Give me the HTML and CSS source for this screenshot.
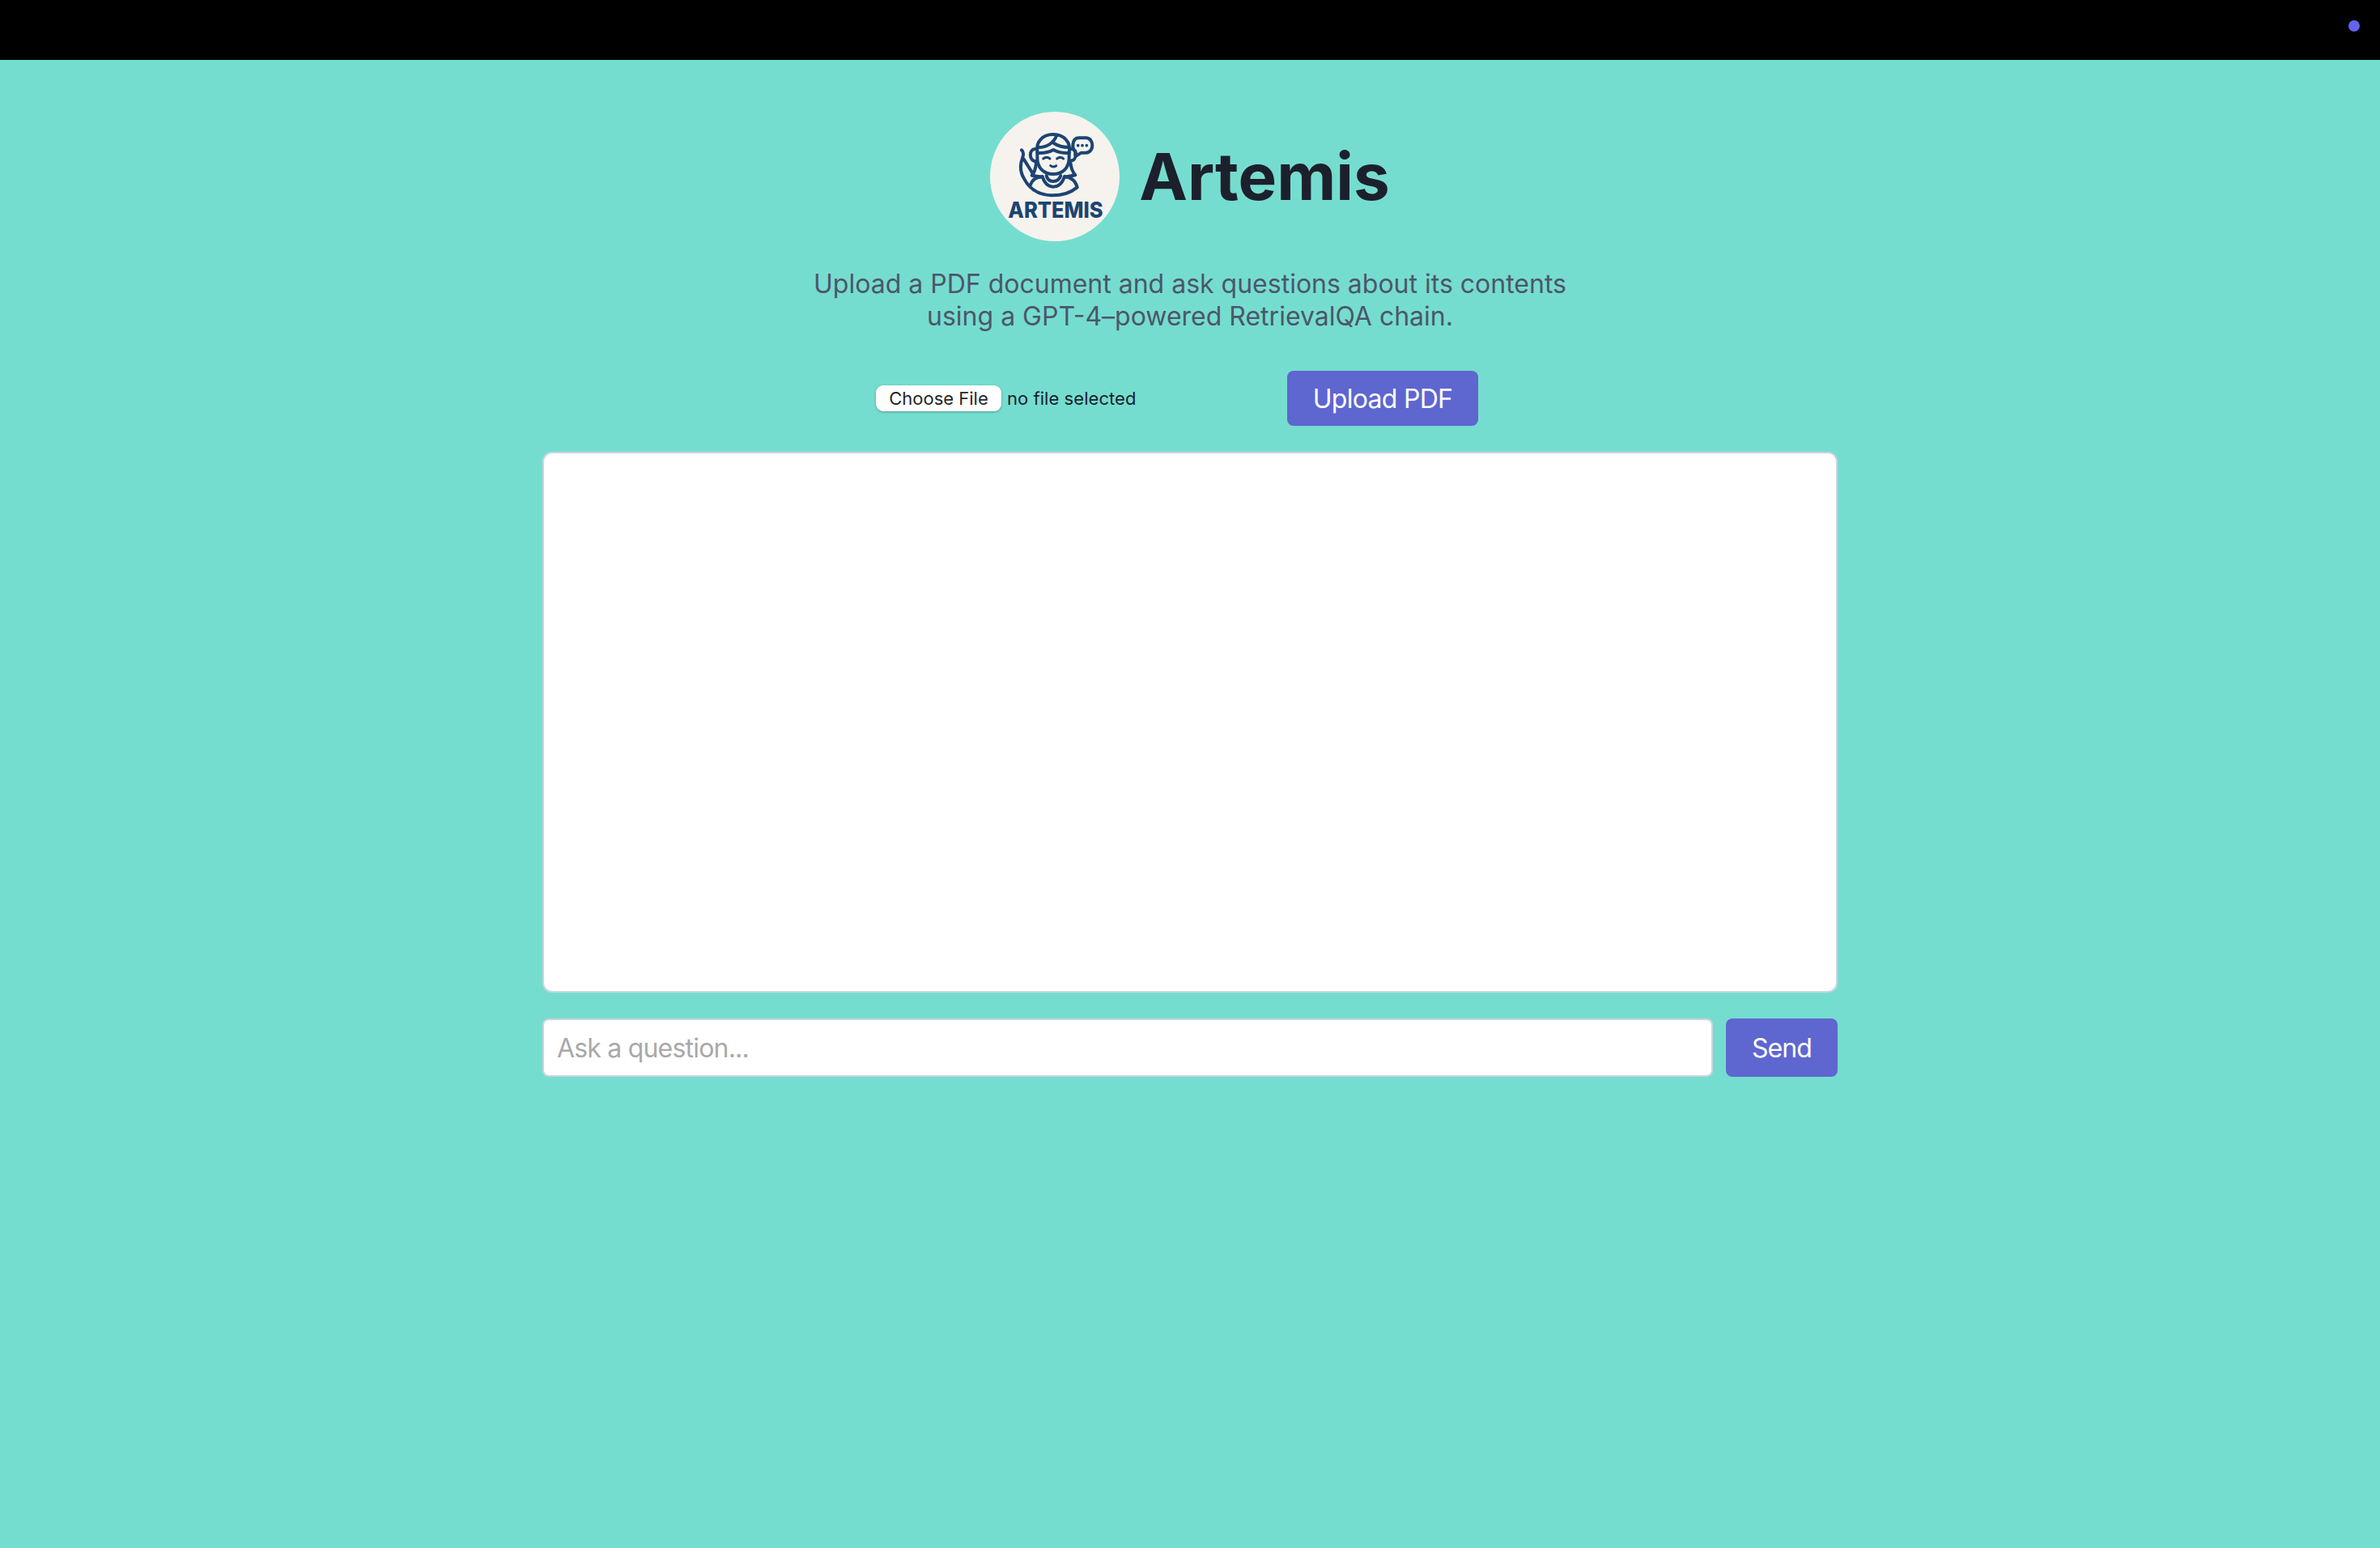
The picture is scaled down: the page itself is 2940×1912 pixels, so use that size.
FILE: index.html
```html
<!DOCTYPE html>
<html lang="en">
<head>
<meta charset="utf-8">
<title>Artemis</title>
<link rel="stylesheet" href="styles.css">
</head>
<body>
<div class="topbar"><span class="indicator"></span></div>
<main class="app">
  <header class="brand">
    <svg class="logo" viewBox="39 38 480 480" role="img" aria-label="Artemis logo">
      <circle cx="279" cy="278" r="240" fill="#f6f3ee"/>
      <g fill="none" stroke="#1c4473" stroke-width="12" stroke-linecap="round" stroke-linejoin="round">
        <path d="M215 190C206 148 236 122 273 122S340 148 332 190"/>
        <path d="M285 127C276 153 248 172 214 170"/>
        <path d="M276 155Q298 170 331 170"/>
        <path d="M215 191Q249 193 274 179Q300 193 332 191"/>
        <path d="M214 187V208C214 246 238 269 273 269S332 246 332 208V187"/>
        <path d="M208 176C181 174 183 222 208 221M338 176C364 174 361 219 340 219"/>
        <path d="M236 212Q249 202 261 212M287 212Q299 202 311 212M263 238Q273 246 284 238" stroke-width="9"/>
        <path d="M210 225Q208 258 194 274L232 280M337 225Q340 256 355 273L315 280"/>
        <path d="M156 180Q166 188 160 207Q143 250 165 286Q195 344 264 348Q323 350 362 318C356 295 340 281 315 278Q303 316 273 316Q244 315 233 278Q197 281 188 311"/>
        <path d="M164 214L198 268"/>
        <path d="M248 275Q253 296 273 296T301 275"/>
        <path d="M355 200V184C341 174 342 135 369 135H394C426 135 426 190 394 190H377L358 202"/>
      </g>
      <g fill="#1c4473"><circle cx="365" cy="163" r="5.500"/><circle cx="381" cy="163" r="5.500"/><circle cx="397" cy="163" r="5.500"/></g>
      <text class="logo-word" x="106" y="432" textLength="352" lengthAdjust="spacingAndGlyphs">ARTEMIS</text>
    </svg>
    <h1 class="title">Artemis</h1>
  </header>
  <p class="intro">Upload a PDF document and ask questions about its contents<br>using a GPT-4–powered RetrievalQA chain.</p>
  <form class="upload">
    <div class="picker"><button type="button" class="choose">Choose File</button><span class="filename">no file selected</span></div>
    <button type="button" class="button button-upload">Upload PDF</button>
  </form>
  <section class="chat"></section>
  <form class="ask">
    <input class="question" type="text" placeholder="Ask a question...">
    <button type="button" class="button button-send">Send</button>
  </form>
</main>
</body>
</html>
```
FILE: styles.css
```css
* { box-sizing: border-box; }
body {
  margin: 0;
  min-height: 1912px;
  background: #75ddcf;
  font-family: Inter, "Liberation Sans", sans-serif;
  color: #1c202c;
}
button, input { font-family: inherit; margin: 0; }
.topbar {
  height: 74px;
  background: #000;
  display: flex;
  justify-content: flex-end;
  padding: 25px 25px 0 0;
}
.indicator { width: 14px; height: 14px; border-radius: 50%; background: #6563ee; }
.app { width: 1600px; margin: 0 auto; padding-top: 64px; }
.brand { display: flex; justify-content: center; align-items: center; gap: 24px; height: 160px; }
.logo { width: 160px; height: 160px; flex: none; }
.logo-word { font: 800 82px Inter, sans-serif; fill: #1c4473; }
.title { margin: 0; font-size: 80px; line-height: 96px; font-weight: 700; }
.intro {
  margin: 33px 0 0;
  text-align: center;
  font-size: 32px;
  line-height: 40px;
  color: #4c566a;
}
.upload { display: flex; height: 68px; margin-top: 47px; padding-left: 412px; align-items: center; }
.picker { width: 508px; display: flex; align-items: center; gap: 7px; }
.choose {
  width: 155px;
  height: 32px;
  padding: 0;
  border: 0;
  border-radius: 9px;
  background: #fff;
  box-shadow: 0 1px 3px rgba(0, 0, 0, .3);
  font-size: 22px;
  line-height: 32px;
  color: #262626;
}
.filename { font-size: 22px; line-height: 32px; letter-spacing: .05px; white-space: nowrap; }
.button {
  border: 0;
  padding: 0;
  border-radius: 8px;
  background: #5e66d0;
  color: #fff;
  font-size: 32px;
  white-space: nowrap;
}
.button-upload { width: 236px; height: 68px; letter-spacing: -.7px; }
.chat { height: 668px; margin-top: 32px; border: 2px solid #cbd5e0; border-radius: 12px; background: #fff; }
.ask { display: flex; gap: 16px; height: 72px; margin-top: 32px; }
.question {
  flex: 1;
  min-width: 0;
  padding: 0 16px;
  border: 2px solid #cbd5e0;
  border-radius: 8px;
  background: #fff;
  font-size: 32px;
  letter-spacing: -.8px;
}
.question::placeholder { color: #a9a9a9; opacity: 1; }
.button-send { width: 138px; letter-spacing: -.9px; }
```
